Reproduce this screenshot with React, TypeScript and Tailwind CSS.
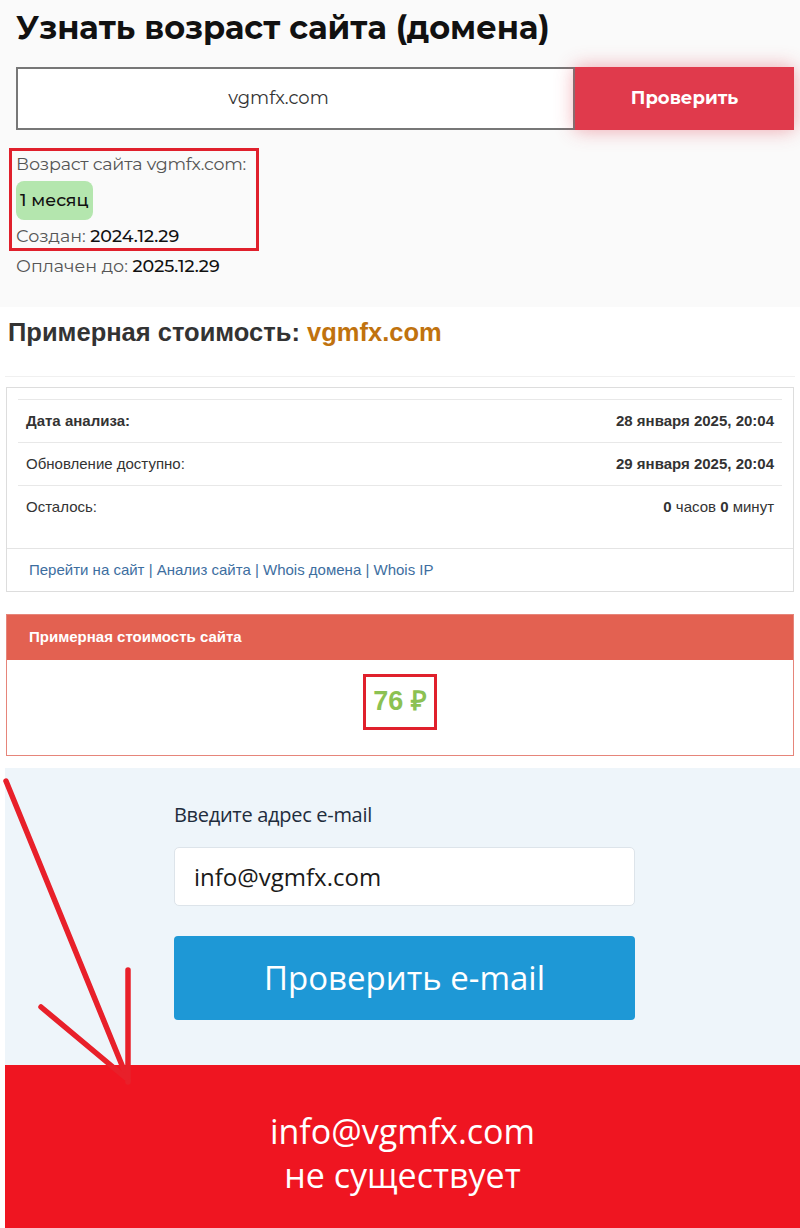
import React from 'react';

const rows = [
  { label: 'Дата анализа:', bold: true, value: <b>28 января 2025, 20:04</b> },
  { label: 'Обновление доступно:', bold: false, value: <b>29 января 2025, 20:04</b> },
  {
    label: 'Осталось:',
    bold: false,
    value: (
      <>
        <b>0</b> часов <b>0</b> минут
      </>
    ),
  },
];

function AgeChecker() {
  return (
    <section className="bg-[#fafafa] h-[307px] pl-4 pr-[6px] pt-[9px] font-['Montserrat','Inter','Noto_Sans',sans-serif]">
      <h1 className="text-[32px] leading-[38px] font-bold text-[#111]">
        Узнать возраст сайта (домена)
      </h1>

      <div className="mt-[20px] flex h-[63px]">
        <div className="flex-1 border-2 border-[#777] bg-white flex items-center justify-center pr-[34px] text-[18px] text-[#333]">
          vgmfx.com
        </div>
        <button className="w-[219px] bg-[#e03a4c] text-white font-bold text-[18px] shadow-[0_0_18px_rgba(224,58,76,0.45)]">
          Проверить
        </button>
      </div>

      <div className="mt-[18px] -ml-[7px] w-[250px] border-[3px] border-[#e0202c] pl-[4px] text-[17.5px] text-[#555] whitespace-nowrap">
        <div className="leading-[26px] tracking-[-0.2px]">Возраст сайта vgmfx.com:</div>
        <div className="mt-[4px] inline-flex h-[39px] items-center rounded-[8px] bg-[#b4e6ae] px-[4px] text-[#111] font-medium">
          1 месяц
        </div>
        <div className="mt-[4px] leading-[24px]">
          Создан: <span className="text-[#111] font-medium">2024.12.29</span>
        </div>
      </div>
      <div className="mt-[2px] leading-[26px] text-[17.5px] text-[#555]">
        Оплачен до: <span className="text-[#111] font-medium">2025.12.29</span>
      </div>
    </section>
  );
}

function CostReport() {
  return (
    <section className="bg-white h-[461px] px-[6px] pt-[11px] font-['Liberation_Sans',Arial,sans-serif]">
      <h2 className="pl-[2px] text-[25.5px] leading-[28px] font-bold text-[#333]">
        Примерная стоимость: <span className="text-[#c0720e]">vgmfx.com</span>
      </h2>
      <div className="mt-[30px] -mx-[1px] border-t border-[#f0f0f0]" />

      <div className="mt-[10px] border border-[#ddd]">
        <div className="px-[11px] pt-[11px] pb-[20px]">
          {rows.map((r) => (
            <div
              key={r.label}
              className="flex h-[43px] items-center justify-between border-t border-[#e8e8e8] px-[8px] text-[15px] text-[#333]"
            >
              <span className={r.bold ? 'font-bold' : ''}>{r.label}</span>
              <span>{r.value}</span>
            </div>
          ))}
        </div>
        <div className="flex h-[43px] items-center border-t border-[#e4e4e4] px-[22px] text-[15px] text-[#3d6e9f]">
          Перейти на сайт | Анализ сайта | Whois домена | Whois IP
        </div>
      </div>

      <div className="mt-[22px] border border-[#e6857a]">
        <div className="flex h-[45px] items-center bg-[#e36151] px-[22px] text-[15px] font-bold text-white">
          Примерная стоимость сайта
        </div>
        <div className="flex h-[95px] items-center justify-center bg-white pb-[12px]">
          <div className="flex h-[56px] w-[74px] items-center justify-center border-[3px] border-[#e0202c] text-[27px] font-bold text-[#8cc152]">
            76 ₽
          </div>
        </div>
      </div>
    </section>
  );
}

function EmailChecker() {
  return (
    <div className="ml-[5px] font-['Open_Sans','Noto_Sans',sans-serif]">
      <section className="h-[297px] bg-[#eef5fa] pl-[169px] pt-[34px]">
        <label className="block text-[20px] leading-[26px] tracking-[-0.3px] text-[#1f2d3d]">Введите адрес e-mail</label>
        <div className="mt-[19px] flex h-[59px] w-[461px] items-center rounded-[5px] border border-[#dde4ea] bg-white pl-[19px] text-[24px] text-[#1a1a1a]">
          info@vgmfx.com
        </div>
        <button className="mt-[30px] h-[84px] w-[461px] rounded-[4px] bg-[#1e98d6] text-[33px] text-white">
          Проверить e-mail
        </button>
      </section>
      <section className="flex h-[163px] flex-col items-center justify-center bg-[#ef1521] pt-[13px] text-[34px] leading-[44px] text-white">
        <div>info@vgmfx.com</div>
        <div>не существует</div>
      </section>
    </div>
  );
}

export default function App() {
  return (
    <div className="relative w-[800px] min-h-[1228px] bg-white overflow-hidden">
      <AgeChecker />
      <CostReport />
      <EmailChecker />

      {/* hand-drawn annotation arrow */}
      <svg className="pointer-events-none absolute left-0 top-0" width="800" height="1228">
        <g stroke="#e8202a" strokeWidth="5.5" strokeLinecap="round" fill="none">
          <line x1="6" y1="781" x2="128" y2="1080" />
          <line x1="128" y1="970" x2="128" y2="1082" />
          <line x1="41" y1="1007" x2="126" y2="1078" />
        </g>
      </svg>
    </div>
  );
}
